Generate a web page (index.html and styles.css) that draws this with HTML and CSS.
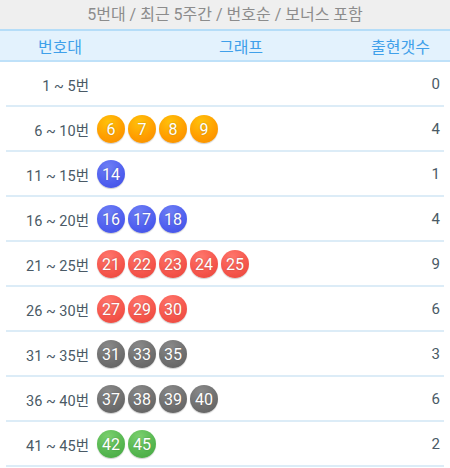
FILE: index.html
```html
<!DOCTYPE html>
<html>
<head>
<meta charset="utf-8">
<title>번호대 통계</title>
<link rel="stylesheet" href="styles.css">
</head>
<body>
<div class="title">5번대 / 최근 5주간 / 번호순 / 보너스 포함</div>
<div class="head">
  <span class="h-range">번호대</span>
  <span class="h-graph">그래프</span>
  <span class="h-count">출현갯수</span>
</div>
<ul class="list">
  <li class="row"><span class="range">1 ~ 5번</span><span class="balls"></span><span class="count">0</span></li>
  <li class="row"><span class="range">6 ~ 10번</span><span class="balls"><i class="ball y">6</i><i class="ball y">7</i><i class="ball y">8</i><i class="ball y">9</i></span><span class="count">4</span></li>
  <li class="row"><span class="range">11 ~ 15번</span><span class="balls"><i class="ball b">14</i></span><span class="count">1</span></li>
  <li class="row"><span class="range">16 ~ 20번</span><span class="balls"><i class="ball b">16</i><i class="ball b">17</i><i class="ball b">18</i></span><span class="count">4</span></li>
  <li class="row"><span class="range">21 ~ 25번</span><span class="balls"><i class="ball r">21</i><i class="ball r">22</i><i class="ball r">23</i><i class="ball r">24</i><i class="ball r">25</i></span><span class="count">9</span></li>
  <li class="row"><span class="range">26 ~ 30번</span><span class="balls"><i class="ball r">27</i><i class="ball r">29</i><i class="ball r">30</i></span><span class="count">6</span></li>
  <li class="row"><span class="range">31 ~ 35번</span><span class="balls"><i class="ball g">31</i><i class="ball g">33</i><i class="ball g">35</i></span><span class="count">3</span></li>
  <li class="row"><span class="range">36 ~ 40번</span><span class="balls"><i class="ball g">37</i><i class="ball g">38</i><i class="ball g">39</i><i class="ball g">40</i></span><span class="count">6</span></li>
  <li class="row"><span class="range">41 ~ 45번</span><span class="balls"><i class="ball gr">42</i><i class="ball gr">45</i></span><span class="count">2</span></li>
</ul>
</body>
</html>
```
FILE: styles.css
```css
*{margin:0;padding:0;box-sizing:border-box;}
body{background:#fff;font-family:Roboto,"Noto Sans CJK KR",sans-serif;color:#4a5a66;}
.title{height:31px;line-height:29px;background:#efefef;color:#8c8c8c;font-size:16px;text-align:center;border-bottom:2px solid #b5ddf8;}
.head{height:31px;background:#e3f2fd;border-bottom:2px solid #bfe1f9;display:flex;align-items:center;color:#3fa0ea;font-size:16px;}
.h-range{width:120px;text-align:center;}
.h-graph{flex:1;text-align:center;padding-left:12px;}
.h-count{width:100px;text-align:right;padding-right:20px;}
.list{list-style:none;margin:0 6px;}
.row{height:45px;display:flex;align-items:center;border-bottom:2px solid #dcecf7;font-size:14.5px;padding-top:1px;}
.range{width:83px;text-align:right;}
.balls{flex:1;display:flex;gap:3px;padding-left:8px;}
.count{width:40px;text-align:right;padding-right:4px;font-size:15px;}
.ball{width:28px;height:28px;border-radius:50%;display:flex;align-items:center;justify-content:center;font-style:normal;color:#fff;font-size:16px;text-shadow:0 0 2px rgba(0,0,0,.25);box-shadow:0 1px 1px rgba(0,0,0,.2);}
.y{background:radial-gradient(circle at 40% 25%,#ffc20a,#ff9c00 60%,#f28c00);}
.b{background:radial-gradient(circle at 40% 25%,#6e7ff5,#4f5fef 60%,#3f4de0);}
.r{background:radial-gradient(circle at 40% 25%,#ff766c,#f5554b 60%,#e5443a);}
.g{background:radial-gradient(circle at 40% 25%,#8a8a8a,#6e6e6e 60%,#5c5c5c);}
.gr{background:radial-gradient(circle at 40% 25%,#7cd06e,#55b650 60%,#43a33f);}
```
